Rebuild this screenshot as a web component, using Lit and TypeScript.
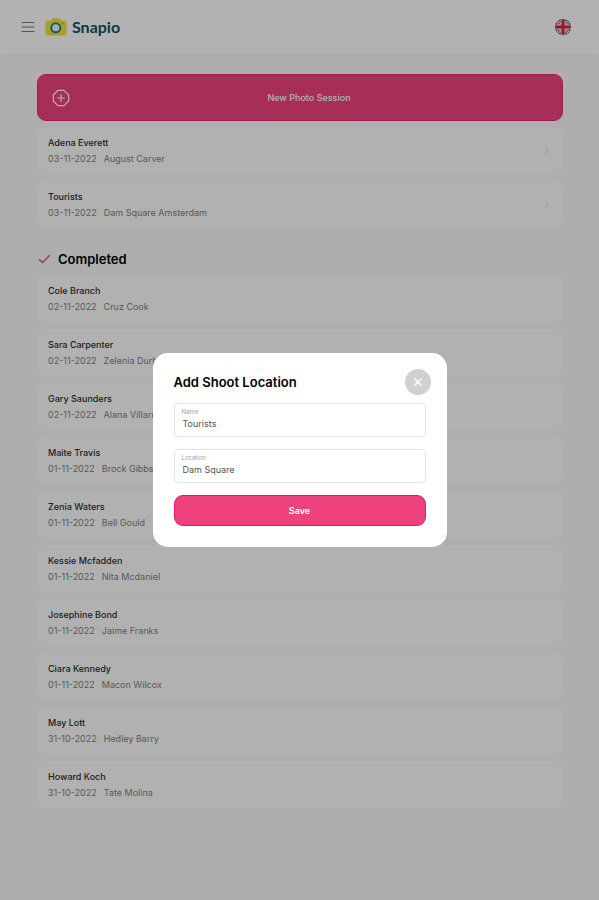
import { LitElement, html, css, svg } from "lit";
import { customElement, property, state } from "lit/decorators.js";

interface Session {
  name: string;
  date: string;
  place: string;
}

const OPEN: Session[] = [
  { name: "Adena Everett", date: "03-11-2022", place: "August Carver" },
  { name: "Tourists", date: "03-11-2022", place: "Dam Square Amsterdam" },
];

const COMPLETED: Session[] = [
  { name: "Cole Branch", date: "02-11-2022", place: "Cruz Cook" },
  { name: "Sara Carpenter", date: "02-11-2022", place: "Zelenia Durham" },
  { name: "Gary Saunders", date: "02-11-2022", place: "Alana Villarreal" },
  { name: "Maite Travis", date: "01-11-2022", place: "Brock Gibbs" },
  { name: "Zenia Waters", date: "01-11-2022", place: "Bell Gould" },
  { name: "Kessie Mcfadden", date: "01-11-2022", place: "Nita Mcdaniel" },
  { name: "Josephine Bond", date: "01-11-2022", place: "Jaime Franks" },
  { name: "Ciara Kennedy", date: "01-11-2022", place: "Macon Wilcox" },
  { name: "May Lott", date: "31-10-2022", place: "Hedley Barry" },
  { name: "Howard Koch", date: "31-10-2022", place: "Tate Molina" },
];

@customElement("session-card")
class SessionCard extends LitElement {
  @property({ attribute: false }) session!: Session;
  @property({ type: Boolean }) open = false;

  static styles = css`
    :host {
      display: block;
    }
    .card {
      display: flex;
      align-items: center;
      justify-content: space-between;
      box-sizing: border-box;
      min-height: 47px;
      padding: 0 14px 0 11px;
      border-radius: 8px;
      background: #fefefe;
      box-shadow: 0 0 4px rgba(0, 0, 0, 0.01);
      font-size: 9px;
      line-height: 16px;
      text-decoration: none;
    }
    .name {
      color: #2c2c2c;
      font-weight: 500;
    }
    .meta {
      display: flex;
      gap: 7px;
      color: #808080;
    }
    .chevron {
      width: 4px;
      height: 8px;
      fill: none;
      stroke: #dadada;
    }
  `;

  render() {
    return html`<a class="card" href="#session">
      <div>
        <div class="name">${this.session.name}</div>
        <div class="meta"><span>${this.session.date}</span><span>${this.session.place}</span></div>
      </div>
      ${this.open
        ? html`<svg class="chevron" viewBox="0 0 4 8" aria-hidden="true"><path d="M.5 .8 3.3 4 .5 7.2" /></svg>`
        : null}
    </a>`;
  }
}

@customElement("app-root")
class AppRoot extends LitElement {
  @state() private modalOpen = true;

  static styles = css`
    :host {
      display: block;
      min-height: 100vh;
      background: #f9f9f9;
      color: #000;
      font-family: Inter, "Liberation Sans", sans-serif;
      font-size: 9px;
    }
    button {
      padding: 0;
      border: 0;
      font-family: inherit;
      font-size: 9px;
      cursor: pointer;
    }
    svg {
      display: block;
    }
    .bar {
      display: flex;
      align-items: center;
      height: 54px;
      padding: 0 28px 0 21px;
      background: #fff;
      box-shadow: 0 0 4px rgba(0, 0, 0, 0.04);
    }
    .icon-button {
      background: none;
    }
    .brand {
      display: flex;
      align-items: center;
      gap: 5px;
      margin: 0 auto 0 10px;
      color: #0f5468;
      font: 700 16px/20px Lato, "Noto Sans", sans-serif;
      text-decoration: none;
    }
    .page {
      padding: 20px 36px 24px 37px;
    }
    .new {
      display: grid;
      grid-template-columns: 18px 1fr;
      align-items: center;
      width: 100%;
      height: 47px;
      margin-bottom: 6px;
      padding: 0 14px;
      border: 1px solid #e42b78;
      border-radius: 9px;
      background: #ee427f;
      color: #fff;
      font-weight: 500;
    }
    .list {
      display: grid;
      gap: 7px;
      margin: 0;
      padding: 0;
      list-style: none;
    }
    .section {
      display: flex;
      align-items: center;
      gap: 7px;
      margin: 22px 0 7px 1px;
      font-size: 13px;
      font-weight: 600;
      line-height: 18px;
    }
    .backdrop {
      position: fixed;
      inset: 0;
      display: flex;
      align-items: center;
      justify-content: center;
      background: rgba(0, 0, 0, 0.3);
    }
    .modal {
      box-sizing: border-box;
      width: 294px;
      max-width: 90%;
      padding: 16px 21px 21px;
      border-radius: 15px;
      background: #fff;
    }
    .modal-head {
      display: flex;
      align-items: center;
      justify-content: space-between;
      margin: 0 -5px 8px 0;
    }
    .title {
      margin: 0;
      font-size: 13px;
      font-weight: 600;
      line-height: 20px;
    }
    .close {
      display: grid;
      place-items: center;
      width: 26px;
      height: 26px;
      border-radius: 50%;
      background: #d0d0d0;
    }
    .form {
      display: grid;
      gap: 12px;
    }
    .field {
      display: block;
      padding: 4px 7px;
      border: 1px solid #e2e2e2;
      border-radius: 4px;
      color: #a0a0a0;
      font-size: 6px;
      line-height: 8px;
    }
    .input {
      display: block;
      box-sizing: border-box;
      width: 100%;
      height: 16px;
      padding: 0 1px;
      border: 0;
      outline: 0;
      background: none;
      color: #555;
      font: 400 9px/16px Inter, "Liberation Sans", sans-serif;
    }
    .save {
      height: 31px;
      border: 1px solid #e8137a;
      border-radius: 9px;
      background: #ee427f;
      color: #fff;
      font-weight: 600;
    }
  `;

  private close() {
    this.modalOpen = false;
  }

  private cards(items: Session[], open: boolean) {
    return html`<ul class="list">
      ${items.map((s) => html`<li><session-card .session=${s} ?open=${open}></session-card></li>`)}
    </ul>`;
  }

  private camera() {
    return svg`<svg width="22" height="18" viewBox="0 0 22 18" aria-hidden="true">
      <path d="M2 2.500h3.600L7.200 .9Q7.700 .3 8.500 .3h5q.8 0 1.300 .6l1.600 1.600H20q1.500 0 1.500 1.500v12q0 1.500-1.500 1.500H2Q.5 17.500 .5 16V4Q.5 2.500 2 2.500Z" fill="#f4e13d" />
      <circle cx="10.800" cy="9.800" r="4.500" fill="#fff" stroke="#178790" stroke-width="2" />
      <circle cx="10.800" cy="9.800" r="2.300" fill="#e7f5f5" />
      <circle cx="17.500" cy="5.500" r="1" fill="#e59a2b" />
    </svg>`;
  }

  private flag() {
    return svg`<svg width="16" height="16" viewBox="0 0 16 16" aria-hidden="true">
      <clipPath id="disc"><circle cx="8" cy="8" r="8" /></clipPath>
      <g clip-path="url(#disc)">
        <path d="M0 0h16v16H0Z" fill="#4b5580" />
        <path d="M0 0 16 16M16 0 0 16" stroke="#f3e6ea" stroke-width="3" />
        <path d="M0 0 16 16M16 0 0 16" stroke="#d3203c" stroke-width="1" />
        <path d="M8 0v16M0 8h16" stroke="#f3e6ea" stroke-width="5" />
        <path d="M8 0v16M0 8h16" stroke="#d3203c" stroke-width="3" />
      </g>
    </svg>`;
  }

  private modal() {
    return html`<div class="backdrop">
      <section class="modal" role="dialog" aria-modal="true" aria-labelledby="title">
        <header class="modal-head">
          <h2 class="title" id="title">Add Shoot Location</h2>
          <button class="close" type="button" aria-label="Close" @click=${this.close}>
            <svg width="10" height="10" viewBox="0 0 10 10" aria-hidden="true">
              <path d="m1.800 1.800 6.400 6.400m0-6.400-6.400 6.400" stroke="#fff" stroke-width="1.500" stroke-linecap="round" />
            </svg>
          </button>
        </header>
        <form class="form" @submit=${(e: Event) => e.preventDefault()}>
          <label class="field">Name<input class="input" name="name" .value=${"Tourists"} /></label>
          <label class="field">Location<input class="input" name="location" .value=${"Dam Square"} /></label>
          <button class="save" type="submit">Save</button>
        </form>
      </section>
    </div>`;
  }

  render() {
    return html`
      <header class="bar">
        <button class="icon-button" type="button" aria-label="Menu">
          <svg width="14" height="12" viewBox="0 0 14 12" aria-hidden="true">
            <path d="M.5 1.500h13M.5 6h13M.5 10.500h13" stroke="#777" stroke-width="1.200" />
          </svg>
        </button>
        <a class="brand" href="#home">${this.camera()}<span>Snapio</span></a>
        <button class="icon-button" type="button" aria-label="Language: English">${this.flag()}</button>
      </header>
      <main class="page">
        <button class="new" type="button">
          <svg width="18" height="18" viewBox="0 0 18 18" fill="none" stroke="#fff" aria-hidden="true">
            <path d="M6 1.300h6L16.700 6v6L12 16.700H6L1.300 12V6Z" stroke-linejoin="round" stroke-width="1.200" />
            <path d="M9 5.500v7M5.500 9h7" stroke-linecap="round" stroke-width="1.200" />
          </svg>
          <span>New Photo Session</span>
        </button>
        ${this.cards(OPEN, true)}
        <h2 class="section">
          <svg width="13" height="10" viewBox="0 0 13 10" aria-hidden="true">
            <path d="m1.500 5.500 3 3 7-7" fill="none" stroke="#ee427f" stroke-width="1.300" stroke-linecap="round" />
          </svg>
          Completed
        </h2>
        ${this.cards(COMPLETED, false)}
      </main>
      ${this.modalOpen ? this.modal() : null}
    `;
  }
}
